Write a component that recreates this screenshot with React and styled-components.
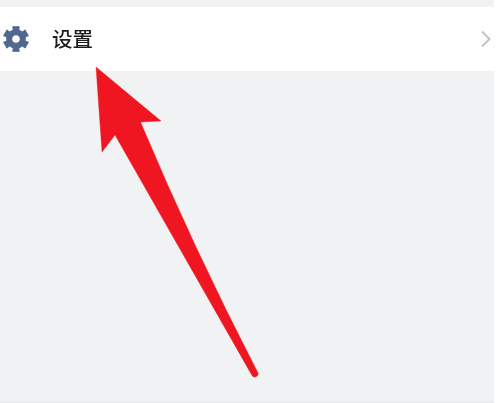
import React from "react";
import styled, { createGlobalStyle } from "styled-components";

const Global = createGlobalStyle`
  html, body { margin: 0; padding: 0; background: #ffffff; }
  body { font-family: "Noto Sans CJK SC", "Liberation Sans", sans-serif; }
`;

const Page = styled.div`
  position: relative;
  width: 494px;
  height: 401px;
  padding-top: 7px;
  box-sizing: border-box;
  background: #f1f2f4;
  overflow: hidden;
`;

const BottomEdge = styled.div`
  width: 494px;
  height: 2px;
  background: #ebecee;
`;

const Row = styled.div`
  height: 64px;
  display: flex;
  align-items: center;
  background: #ffffff;
  padding-left: 3px;
  padding-right: 2px;
`;

const Label = styled.span`
  margin-left: 23px;
  padding-bottom: 2px;
  font-size: 20.5px;
  font-weight: 500;
  line-height: 28px;
  color: #1c1c1c;
  flex: 1;
  filter: blur(0.4px);
`;

const Arrow = styled.svg`
  position: absolute;
  left: 0;
  top: 0;
  filter: blur(0.4px);
`;

const Icon = styled.svg`
  display: block;
  filter: blur(0.6px);
`;

const Chevron = styled.svg`
  display: block;
  filter: blur(0.4px);
`;

const gearPath = (() => {
  const cx = 13, cy = 13;
  const pts = [];
  for (let i = 0; i < 6; i++) {
    const a = (i * 60 - 90) * Math.PI / 180;
    const w = 0.25;
    const gapA = a + Math.PI / 6;
    pts.push([a - w, 12.6], [a + w, 12.6], [gapA - 0.24, 9.4], [gapA + 0.24, 9.4]);
  }
  return pts
    .map(([a, r], i) => `${i ? "L" : "M"}${(cx + r * Math.cos(a)).toFixed(2)} ${(cy + r * Math.sin(a)).toFixed(2)}`)
    .join(" ") + " Z M13 8.6 A4.4 4.4 0 1 0 13 17.4 A4.4 4.4 0 1 0 13 8.6 Z";
})();

export default function App() {
  return (
    <>
      <Global />
      <Page>
        <Row>
          <Icon width="26" height="26" viewBox="0 0 26 26">
            <path d={gearPath} fill="#52678f" fillRule="evenodd" stroke="#52678f" strokeWidth="1.2" strokeLinejoin="round" />
          </Icon>
          <Label>设置</Label>
          <Chevron width="12" height="18" viewBox="0 0 12 18">
            <path d="M2 1.5 L9.5 9 L2 16.5" fill="none" stroke="#c3c3c5" strokeWidth="2" />
          </Chevron>
        </Row>
        <Arrow width="494" height="401" viewBox="0 0 494 401">
          <path d="M96 67 L161 121 L140.5 122 Q193 247 257.5 372 A3.2 3.2 0 0 1 252 375.5 L115 135 L102 152 Z" fill="#ef1621" stroke="#ef1621" strokeWidth="0.4" strokeLinejoin="round" />
        </Arrow>
      </Page>
      <BottomEdge />
    </>
  );
}
